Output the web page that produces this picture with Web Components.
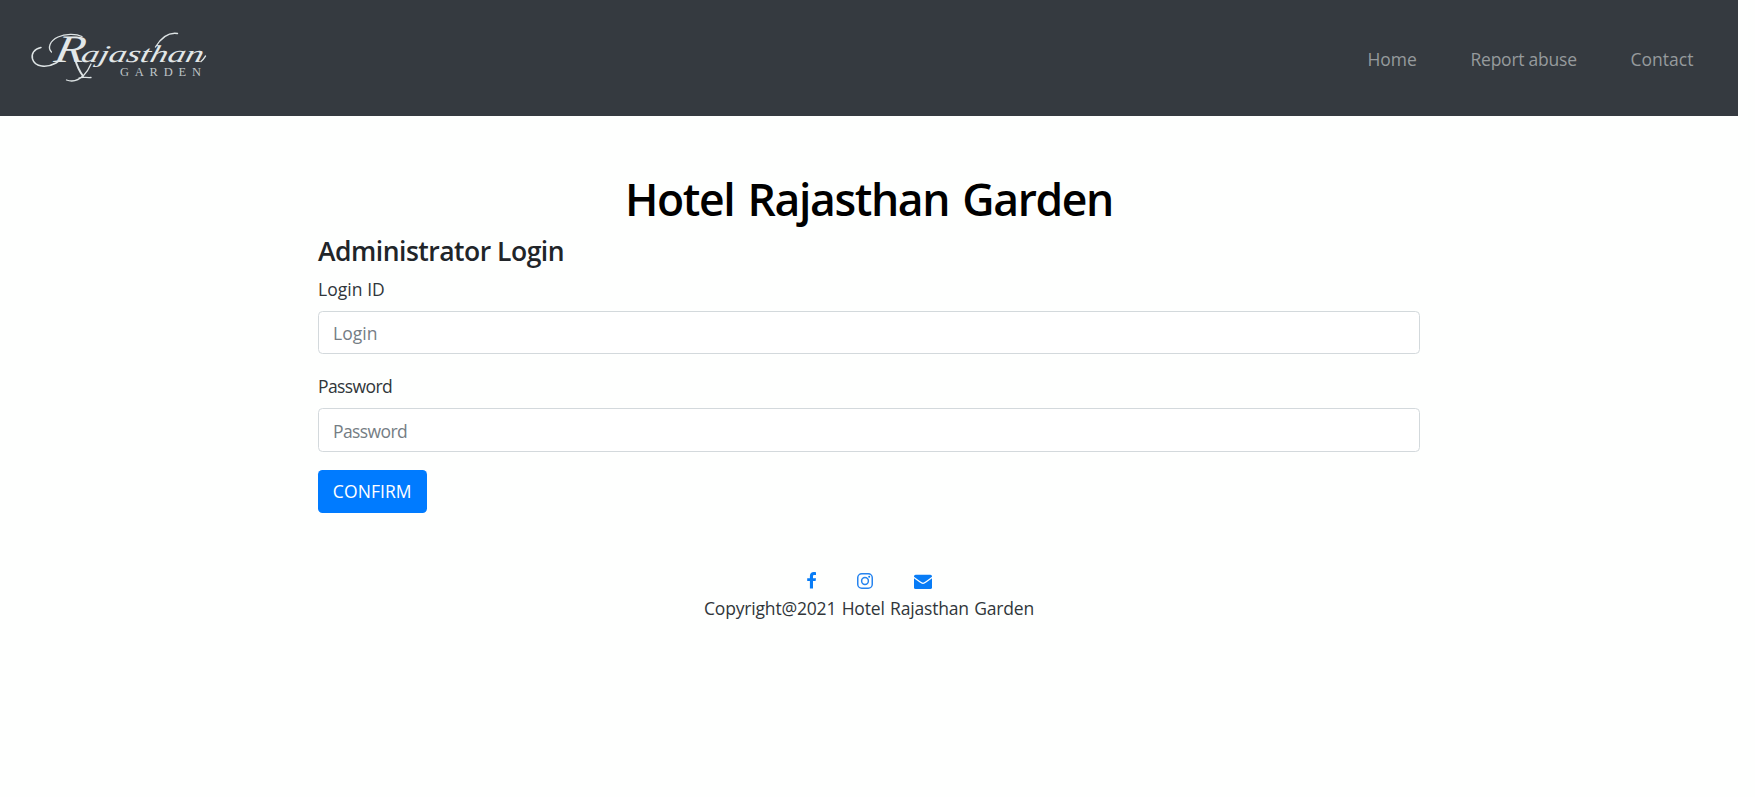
<!DOCTYPE html>
<html lang="en">
<head>
<meta charset="utf-8">
<title>Hotel Rajasthan Garden</title>
<style>
body{margin:0;background:#fefffe;font:17.5px/27px "Open Sans","Noto Sans",sans-serif;color:#30363a}
</style>
</head>
<body>
<hotel-page></hotel-page>
<script>
const define=(name,html,setup)=>customElements.define(name,class extends HTMLElement{
  connectedCallback(){
    if(this.shadowRoot)return;
    this.attachShadow({mode:'open'}).innerHTML=html;
    if(setup)setup(this,this.shadowRoot);
  }
});

define('hotel-logo',`
<style>:host{display:block;width:240px;height:100px}svg{display:block}
text{font-family:"Liberation Serif",serif;fill:#e2e7e8}
path{fill:none;stroke:#dde3e4;stroke-linecap:round;stroke-linejoin:round}</style>
<svg width="240" height="100" viewBox="0 0 240 100">
<path stroke-width="1.5" d="M41 47.500C34 49 31 54 32.500 59C35 67.500 47 68 56 63C58 62 59.500 60.500 61 59"/>
<path stroke-width="1.300" d="M51.500 52C47.500 48 49.500 41 58 37C65 33.700 76 33.500 82 36.500"/>
<path stroke-width="2" d="M75 59C77 66 80 72 83 76"/>
<path stroke-width="1.300" d="M66.500 80C73 82.500 79 80 84 75C87 72 89 68.500 91 64M79 78C82 76.500 87 78 91 77.500"/>
<path stroke-width="1.400" d="M155.500 47C161 38 168 32 177.500 33.500M201 61.500C203 60 204.500 57.500 205.500 56"/>
<text transform="translate(53 61.500) skewX(-12)" x="0" y="0" font-size="39" font-style="italic" textLength="30" lengthAdjust="spacingAndGlyphs">R</text>
<text transform="translate(80 62) skewX(-14)" x="0" y="0" font-size="24" font-style="italic" textLength="122" lengthAdjust="spacingAndGlyphs">ajasthan</text>
<text x="120" y="76" font-size="12.500" textLength="81" lengthAdjust="spacing" style="fill:#bfc4c7">GARDEN</text>
</svg>`);

define('nav-link',`<style>:host{display:block;color:#969a9d;letter-spacing:var(--track,0)}a{color:inherit;text-decoration:none}</style><a href="#"><slot></slot></a>`);

define('site-header',`
<style>
:host{display:flex;box-sizing:border-box;width:1738px;height:115.500px;background:#353a40;align-items:flex-start;justify-content:space-between}
nav{display:grid;grid-template-columns:103px 160px 107.500px;padding-top:46px}
</style>
<hotel-logo></hotel-logo>
<nav><nav-link style="--track:-.04px">Home</nav-link><nav-link style="--track:-.24px">Report abuse</nav-link><nav-link style="--track:.02px">Contact</nav-link></nav>`);

define('text-field',`
<style>
:host{display:block}
label{display:block;height:27px;margin-bottom:8px;letter-spacing:var(--track)}
input{display:block;box-sizing:border-box;width:100%;height:var(--h,43px);border:1px solid #d3d9dc;border-radius:4.500px;padding:2px 14px 0;font:inherit;letter-spacing:var(--track);background:#fff;color:#495057;outline:0}
input::placeholder{color:#757d84;opacity:1}
</style><label></label><input>`,(host,root)=>{
  const label=root.querySelector('label'),input=root.querySelector('input');
  label.textContent=host.getAttribute('label');
  input.placeholder=host.getAttribute('hint');
  input.type=host.getAttribute('type')||'text';
});

define('primary-button',`
<style>:host{display:block}
button{box-sizing:border-box;width:108.500px;height:43px;border:0;border-radius:4.500px;background:#007bff;color:#fff;font:inherit;letter-spacing:.07px;padding:1px 0 0;display:block}</style>
<button><slot></slot></button>`);

define('login-form',`
<style>
:host{display:block;width:1102px;margin:0 auto}
h4{font-size:26.500px;line-height:32px;font-weight:600;letter-spacing:-.5px;margin:0 0 9px;color:#212529}
text-field{margin-bottom:18px}
text-field:first-of-type{margin-bottom:19px;--pad:3px}
</style>
<h4>Administrator Login</h4>
<text-field label="Login ID" hint="Login" style="--track:.05px"></text-field>
<text-field label="Password" hint="Password" type="password" style="--track:-.6px;--h:44px"></text-field>
<primary-button>CONFIRM</primary-button>`);

define('site-footer',`
<style>
:host{display:block;text-align:center}
.icons{display:flex;justify-content:center;height:28px}
svg{display:block;fill:#087cf6;height:27px}
.f{width:9px;margin-right:41px}.i{width:16px;margin-right:41px}.m{width:18px}
p{margin:0;letter-spacing:-.18px;word-spacing:1px}
</style>
<div class="icons">
<svg class="f" viewBox="0 0 9 27"><path d="M9 5.200v2.700H7.400C6.200 7.900 6 8.500 6 9.300v1.900h3l-.4 2.900H6v7.500H2.900v-7.500H.2v-2.900h2.700V8.900C2.900 6.300 4.500 5 6.800 5c1 0 1.900.1 2.200.2z"/></svg>
<svg class="i" viewBox="0 0 16 27"><rect x=".75" y="6.750" width="14.500" height="14.500" rx="4" fill="none" stroke="#2684ef" stroke-width="1.500"/><circle cx="8" cy="14" r="3.400" fill="none" stroke="#2684ef" stroke-width="1.500"/><circle cx="12.200" cy="9.800" r="1"/></svg>
<svg class="m" viewBox="0 0 18 27"><rect y="7.800" width="18" height="14.200" rx="1.600"/><path d="M0 10.300C1 11.500 3 12.700 5.800 14.800C8.500 16.800 9.500 16.800 12.200 14.800C15 12.700 17 11.500 18 10.300" fill="none" stroke="#fefffe" stroke-width="1.300"/></svg>
</div>
<p>Copyright@2021 Hotel Rajasthan Garden</p>`);

define('hotel-page',`
<style>
:host{display:block;height:797px;overflow:hidden}
main{width:1738px}
h1{margin:56px 0 9px;font-size:44.500px;line-height:54px;font-weight:600;letter-spacing:-1.380px;word-spacing:3px;text-align:center;color:#000}
site-footer{margin-top:54px}
</style>
<site-header></site-header>
<main><h1>Hotel Rajasthan Garden</h1><login-form></login-form><site-footer></site-footer></main>`);
</script>
</body>
</html>
